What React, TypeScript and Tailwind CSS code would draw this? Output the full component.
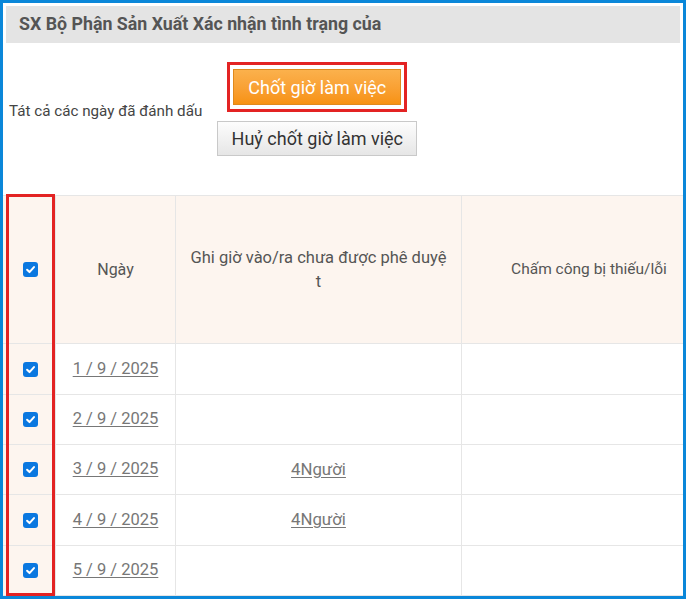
import React from "react";

const Check = () => (
  <span className="inline-flex h-[15px] w-[15px] items-center justify-center rounded-[3px] bg-[#0b78e0]">
    <svg width="11" height="11" viewBox="0 0 12 12" fill="none">
      <path d="M2.3 6.3 L4.9 8.8 L9.8 3.4" stroke="white" strokeWidth="2.2" strokeLinecap="round" strokeLinejoin="round" />
    </svg>
  </span>
);

const rows = [
  { d: "1 / 9 / 2025", p: "", h: "h-[51px]" },
  { d: "2 / 9 / 2025", p: "", h: "h-[50px]" },
  { d: "3 / 9 / 2025", p: "4Người", h: "h-[50px]" },
  { d: "4 / 9 / 2025", p: "4Người", h: "h-[51px]" },
  { d: "5 / 9 / 2025", p: "", h: "h-[50px]" },
];

export default function App() {
  return (
    <div
      className="relative h-[599px] w-[686px] overflow-hidden border-[3px] border-[#0a87d9] bg-white"
      style={{ fontFamily: "Roboto, 'Noto Sans', sans-serif" }}
    >
      <div className="mx-[3px] mt-[3px] flex h-[37px] items-center bg-[#e4e4e4] px-[13px] text-[17.8px] font-bold text-[#555]">
        SX Bộ Phận Sản Xuất Xác nhận tình trạng của
      </div>

      <div className="flex items-center pl-[6px] pt-[19px]">
        <div className="pt-[4px] text-[15.2px] text-[#444]">Tát cả các ngày đã đánh dấu</div>
        <div className="ml-[15px] flex flex-col items-center">
          <div className="border-[3px] border-[#e32323] px-[3px] py-[4px]">
            <button className="flex h-[36px] w-[168px] items-center justify-center border border-[#e0891c] bg-gradient-to-b from-[#fbb14c] to-[#f7920f] text-[18px] text-white">
              Chốt giờ làm việc
            </button>
          </div>
          <button className="mt-[9px] flex h-[35px] w-[200px] items-center justify-center border border-[#c9c9c9] bg-gradient-to-b from-[#fdfdfd] to-[#e6e6e6] text-[18px] text-[#333]">
            Huỷ chốt giờ làm việc
          </button>
        </div>
      </div>

      <div className="mt-[39px] border-t border-[#e6e6e6]">
        <div className="grid grid-cols-[53px_120px_286px_254px] h-[148px] border-b border-[#e6e6e6] bg-[#fdf5ef] text-[#555]">
          <div className="flex items-center justify-center border-r border-[#e6e6e6] pl-[3px]">
            <Check />
          </div>
          <div className="flex items-center justify-center border-r border-[#e6e6e6] text-[16px]">Ngày</div>
          <div className="flex flex-col items-center justify-center border-r border-[#e6e6e6] text-[16.5px] leading-[24px]">
            <span>Ghi giờ vào/ra chưa được phê duyệ</span>
            <span>t</span>
          </div>
          <div className="flex items-center justify-center text-[15.5px]">Chấm công bị thiếu/lỗi</div>
        </div>
        {rows.map((r) => (
          <div
            key={r.d}
            className={`grid grid-cols-[53px_120px_286px_254px] border-b border-[#e6e6e6] text-[#777] ${r.h}`}
          >
            <div className="flex items-center justify-center border-r border-[#e6e6e6] bg-[#fdf5ef] pl-[3px]">
              <Check />
            </div>
            <div className="flex items-center justify-center border-r border-[#e6e6e6] text-[16.5px] underline underline-offset-2">
              {r.d}
            </div>
            <div className="flex items-center justify-center border-r border-[#e6e6e6] text-[16.8px] underline underline-offset-2">
              {r.p}
            </div>
            <div />
          </div>
        ))}
      </div>

      <div className="pointer-events-none absolute left-[3px] top-[191px] h-[402px] w-[49px] border-[3px] border-[#e32323]" />
    </div>
  );
}
